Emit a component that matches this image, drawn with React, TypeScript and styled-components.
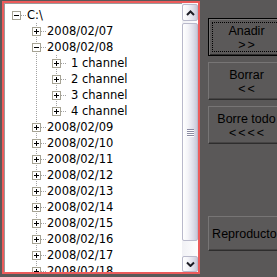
import React from "react";
import styled, { createGlobalStyle, css } from "styled-components";

const GlobalStyle = createGlobalStyle`
    html, body {
        margin: 0;
        padding: 0;
        width: 277px;
        height: 277px;
        overflow: hidden;
        background: #5a5858;
    }
`;

interface TreeNode {
    label: string;
    open?: boolean;
    pad?: number;
    children?: TreeNode[];
}

interface FlatRow {
    label: string;
    pad: number;
    open: boolean;
    root: boolean;
    last: boolean;
    guides: boolean[];
}

const channels: TreeNode[] = [1, 2, 3, 4].map(n => ({ label: `${n} channel`, pad: 5 }));

const days: TreeNode[] = ["07", "08", "09", "10", "11", "12", "13", "14", "15", "16", "17", "18", "19", "20"].map(d =>
    d === "08" ? { label: `2008/02/${d}`, open: true, children: channels } : { label: `2008/02/${d}` }
);

const tree: TreeNode = { label: "C:\\", open: true, children: days };

function flatten(node: TreeNode, guides: boolean[], last: boolean, root: boolean, out: FlatRow[]) {
    out.push({ label: node.label, pad: node.pad ?? 1, open: !!node.open, root, last, guides });
    if (node.open && node.children) {
        const next = root ? [false] : [...guides, !last];
        node.children.forEach((c, i) => flatten(c, next, i === node.children!.length - 1, false, out));
    }
    return out;
}

const rows = flatten(tree, [], true, true, []);

const dotsV = css`
    background-image: linear-gradient(to bottom, #a3a3a3 50%, transparent 50%);
    background-size: 1px 2px;
    background-repeat: repeat-y;
`;

const Window = styled.div`
    display: flex;
    align-items: flex-start;
    width: 277px;
    height: 277px;
    padding: 1px 0 0 2px;
    box-sizing: border-box;
    overflow: hidden;
`;

const Frame = styled.div`
    flex: none;
    width: 198px;
    height: 273px;
    box-sizing: border-box;
    border: 2px solid #ec5b5b;
    display: flex;
    background: #fff;
`;

const TreePane = styled.div`
    flex: 1;
    min-width: 0;
    overflow: hidden;
    border-top: 1px solid #9a9a9a;
    border-left: 1px solid #9a9a9a;
    padding: 3px 0 0 1px;
    background: #fff;
`;

const Row = styled.div`
    display: flex;
    height: 16px;
`;

const Guide = styled.div<{ $line: boolean }>`
    flex: none;
    width: 20px;
    ${p => p.$line && css`
        ${dotsV}
        background-position: 10px 0;
    `}
`;

const Branch = styled.div`
    flex: none;
    width: 20px;
    display: flex;
    flex-direction: column;
`;

const StemTop = styled.div<{ $line: boolean }>`
    height: 4px;
    ${p => p.$line && css`
        ${dotsV}
        background-position: 10px 0;
    `}
`;

const StemBottom = styled.div<{ $line: boolean }>`
    flex: 1;
    ${p => p.$line && css`
        ${dotsV}
        background-position: 10px 1px;
    `}
`;

const Knot = styled.div`
    display: flex;
    height: 9px;
    padding-left: 6px;
`;

const Connector = styled.div`
    width: 5px;
    background-image: linear-gradient(to right, #a3a3a3 50%, transparent 50%);
    background-size: 2px 1px;
    background-repeat: repeat-x;
    background-position: 0 4px;
`;

const Label = styled.span<{ $pad: number }>`
    padding-left: ${p => p.$pad}px;
    font-family: "DejaVu Sans", Verdana, sans-serif;
    font-size: 11.5px;
    line-height: 16px;
    color: #000;
    white-space: nowrap;
`;

const ScrollBar = styled.div`
    flex: none;
    width: 16px;
    display: flex;
    flex-direction: column;
    padding-top: 1px;
    box-sizing: border-box;
    background: linear-gradient(to right, #f1f1f5, #fdfdfe);
`;

const scrollPiece = css`
    box-sizing: border-box;
    border: 1px solid #b9b9cb;
    border-radius: 2px;
    background: linear-gradient(to right, #ffffff 0%, #f4f4f8 35%, #dcdce8 75%, #c8c8d8 100%);
    display: flex;
    align-items: center;
    justify-content: center;
`;

const ScrollButton = styled.div<{ $h: number }>`
    ${scrollPiece}
    height: ${p => p.$h}px;
    flex: none;
`;

const Thumb = styled.div`
    ${scrollPiece}
    height: 218px;
    margin-top: 2px;
    flex: none;
    flex-direction: column;
    gap: 1px;
`;

const Grip = styled.div`
    width: 7px;
    height: 1px;
    background: #8a8aa2;
    box-shadow: 0 1px 0 #ffffff;
`;

const Track = styled.div`
    flex: 1;
`;

const Buttons = styled.div`
    flex: none;
    margin-left: 8px;
    padding-top: 17px;
    display: flex;
    flex-direction: column;
    gap: 6px;
`;

const Button = styled.div<{ $default?: boolean; $h?: number; $top?: number }>`
    width: 77px;
    height: ${p => p.$h ?? 38}px;
    margin-top: ${p => p.$top ?? 0}px;
    box-sizing: border-box;
    padding: 3px;
    display: flex;
    background: #5b5959;
    border: 1px solid;
    border-color: #777575 #2e2d2d #2e2d2d #777575;
    box-shadow: inset -1px -1px 0 #464444;
    ${p => p.$default && css`
        border-color: #000;
        box-shadow: inset 1px 1px 0 #777575, inset -1px -1px 0 #2e2d2d;
    `}
`;

const Face = styled.div<{ $focus?: boolean }>`
    flex: 1;
    min-width: 0;
    display: flex;
    flex-direction: column;
    align-items: center;
    justify-content: center;
    padding-top: 1px;
    border: 1px dotted ${p => (p.$focus ? "#000" : "transparent")};
    font-family: "Liberation Sans", Arial, sans-serif;
    font-size: 12.5px;
    line-height: 14px;
    color: #000;
    white-space: nowrap;
`;

const Arrows = styled.span`
    letter-spacing: 2px;
    padding-left: 2px;
`;

function ExpandBox({ open }: { open: boolean }) {
    return (
        <svg width="9" height="9" viewBox="0 0 9 9" shapeRendering="crispEdges">
            <rect x="0.5" y="0.5" width="8" height="8" fill="#fff" stroke="#a6a394" />
            <path d="M2 4.5h5" stroke="#000" />
            {!open && <path d="M4.5 2v5" stroke="#000" />}
        </svg>
    );
}

function Chevron({ down }: { down?: boolean }) {
    return (
        <svg width="9" height="6" viewBox="0 0 9 6">
            <path d={down ? "M1 1.5L4.5 5L8 1.5" : "M1 5L4.5 1.5L8 5"} fill="none" stroke="#1c1c24" strokeWidth="2" />
        </svg>
    );
}

function TreeRow({ row }: { row: FlatRow }) {
    return (
        <Row>
            {row.guides.map((g, i) => (
                <Guide key={i} $line={g} />
            ))}
            <Branch>
                <StemTop $line={!row.root} />
                <Knot>
                    <ExpandBox open={row.open} />
                    <Connector />
                </Knot>
                <StemBottom $line={!row.root && !row.last} />
            </Branch>
            <Label $pad={row.pad}>{row.label}</Label>
        </Row>
    );
}

export default function App() {
    return (
        <>
            <GlobalStyle />
            <Window>
                <Frame>
                    <TreePane>
                        {rows.map((r, i) => (
                            <TreeRow key={i} row={r} />
                        ))}
                    </TreePane>
                    <ScrollBar>
                        <ScrollButton $h={17}>
                            <Chevron />
                        </ScrollButton>
                        <Thumb>
                            <Grip />
                            <Grip />
                            <Grip />
                            <Grip />
                        </Thumb>
                        <Track />
                        <ScrollButton $h={16}>
                            <Chevron down />
                        </ScrollButton>
                    </ScrollBar>
                </Frame>
                <Buttons>
                    <Button $default>
                        <Face $focus>
                            <span>Anadir</span>
                            <Arrows>&gt;&gt;</Arrows>
                        </Face>
                    </Button>
                    <Button>
                        <Face>
                            <span>Borrar</span>
                            <Arrows>&lt;&lt;</Arrows>
                        </Face>
                    </Button>
                    <Button>
                        <Face>
                            <span>Borre todo</span>
                            <Arrows>&lt;&lt;&lt;&lt;</Arrows>
                        </Face>
                    </Button>
                    <Button $h={35} $top={66}>
                        <Face>
                            <span>Reproductor</span>
                        </Face>
                    </Button>
                </Buttons>
            </Window>
        </>
    );
}
